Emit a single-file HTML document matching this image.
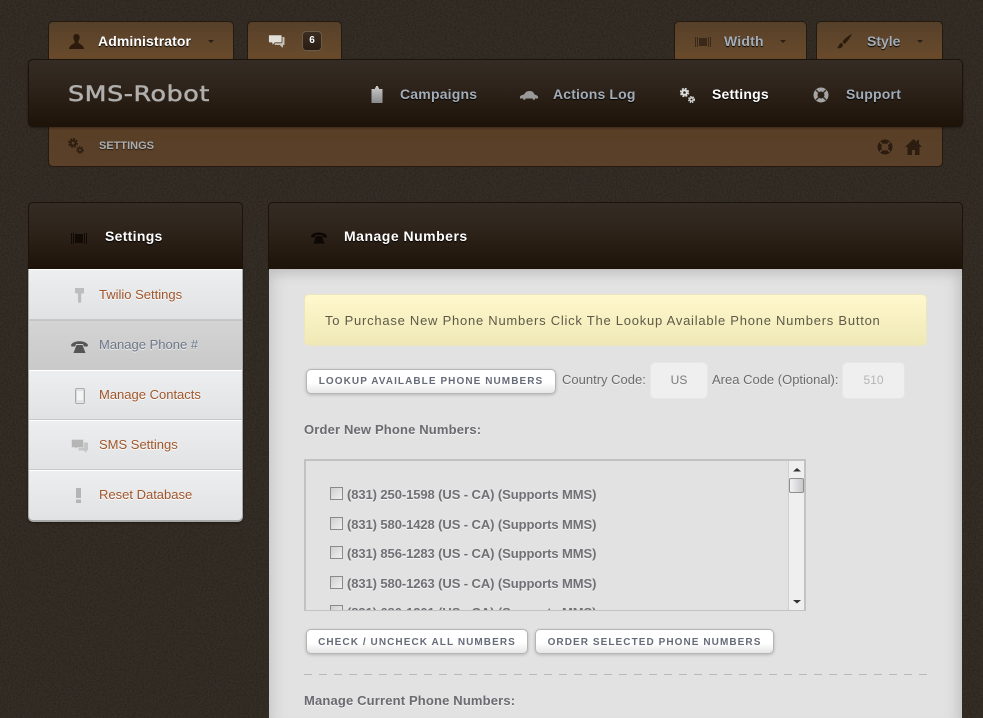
<!DOCTYPE html>
<html><head><meta charset="utf-8"><style>
html,body{margin:0;padding:0;width:983px;height:718px;overflow:hidden;background:#352e26}
body{position:relative;font-family:"Liberation Sans",sans-serif}
.a{position:absolute;box-sizing:border-box}
.t{position:absolute;white-space:nowrap;line-height:16px}
.tab{position:absolute;top:21px;height:40px;box-sizing:border-box;border:1px solid #241a10;border-radius:5px 5px 0 0;background:linear-gradient(#56402a,#6a4b2b)}
.nav{font-weight:bold;font-size:14px;color:#a3adb8;text-shadow:0 1px 1px #000;letter-spacing:.2px}
.w{color:#fff}
.caret{position:absolute;width:0;height:0;border:3px solid transparent;border-top:3px solid #2c1f12;border-bottom:0}
.dark{background:linear-gradient(#342c24 0,#2e241b 40%,#1e1308 100%)}
.item{position:absolute;left:29px;width:213px;height:50px;box-sizing:border-box;background:linear-gradient(#edeef0,#e1e2e4);border-top:1px solid #fff;border-bottom:1px solid #c8c8c8}
.il{position:absolute;left:99px;font-size:13px;color:#a0562a;white-space:nowrap;line-height:16px;text-shadow:0 1px 0 #fff}
.btn{position:absolute;box-sizing:border-box;height:25px;background:linear-gradient(#fff 55%,#e6e6e6);border:1px solid #b5b5b5;border-radius:5px;box-shadow:0 1px 3px rgba(0,0,0,.2);font-size:10px;font-weight:bold;letter-spacing:1.07px;color:#666b78;text-align:center;line-height:23px;white-space:nowrap}
.inp{position:absolute;box-sizing:border-box;height:37px;background:#efefef;border:1px solid #e6e6e6;border-radius:5px;text-align:center;line-height:34px;font-size:12px}
.lbl{position:absolute;font-size:13px;color:#6b6b6b;white-space:nowrap;line-height:16px;text-shadow:0 1px 0 #f4f4f4}
.b{font-weight:bold;font-size:13px;letter-spacing:.16px;color:#6a6a70;text-shadow:0 1px 0 #f4f4f4}
.chk{position:absolute;left:330px;width:13px;height:13px;box-sizing:border-box;border:1px solid #8a8a8a;background:linear-gradient(135deg,#cfcfcf,#f0f0f0)}
.num{position:absolute;left:347px;font-size:13px;letter-spacing:-.09px;font-weight:bold;color:#707075;white-space:nowrap;line-height:16px;text-shadow:0 1px 0 #f4f4f4}
svg{position:absolute;overflow:visible}
</style></head><body>

<svg style="left:0;top:0" width="983" height="718"><filter id="n" x="0" y="0" width="100%" height="100%"><feTurbulence type="fractalNoise" baseFrequency=".6" numOctaves="3" seed="4"/><feColorMatrix values="0 0 0 0 0  0 0 0 0 0  0 0 0 0 0  .5 0 0 0 -.18"/></filter><rect width="983" height="718" filter="url(#n)"/></svg>

<!-- top tabs -->
<div class="tab" style="left:48px;width:186px"></div>
<svg style="left:68px;top:33px" width="17" height="17" viewBox="0 0 17 17"><path fill="#2c1a0c" d="M8.500 1C6 1 5 3 5.500 5.500 5.800 7 6.800 8 6.800 9.500 6 11 1 12 1 16h15c0-4-5-5-5.800-6.500C10.200 8 11.200 7 11.500 5.500 12 3 11 1 8.500 1z"/></svg>
<div class="t nav w" style="left:98px;top:33px;letter-spacing:.1px">Administrator</div>
<div class="caret" style="left:208px;top:40px"></div>

<div class="tab" style="left:247px;width:95px"></div>
<svg style="left:268px;top:34px" width="18" height="15" viewBox="0 0 18 15"><path fill="#c4c0b8" stroke="#c4c0b8" stroke-linejoin="round" d="M7 3.500h9v7h-1.500v2.500l-2.500-2.500H7z"/><path fill="#e2ded8" stroke="#5a4229" stroke-width=".8" stroke-linejoin="round" d="M1.500 .8h11.500a1 1 0 0 1 1 1v6a1 1 0 0 1-1 1H7l-3 3v-3H1.500a1 1 0 0 1-1-1v-6a1 1 0 0 1 1-1z"/></svg>
<div class="a" style="left:302px;top:31px;width:20px;height:20px;border-radius:4px;background:linear-gradient(#3a2c20,#2a1d13);border:1px solid #6a5a46;color:#fff;font-size:10px;font-weight:bold;text-align:center;line-height:18px">6</div>

<div class="tab" style="left:674px;width:133px"></div>
<svg style="left:695px;top:36px" width="16" height="12" viewBox="0 0 16 12"><path fill="#3a2818" d="M0 1h1v10H0zM2 1h1v10H2zM13 1h1v10h-1zM15 1h1v10h-1zM4 2h8v8H4z"/></svg>
<div class="t nav" style="left:724px;top:33px">Width</div>
<div class="caret" style="left:780px;top:40px"></div>

<div class="tab" style="left:816px;width:127px"></div>
<svg style="left:836px;top:33px" width="17" height="17" viewBox="0 0 17 17"><path fill="#2c1a0c" d="M16 1C12 3 8 6 6.500 9l2 2C11 9 14 5 16 1zM5.500 10C3 10 3.500 13 1 15c3 1 6-.5 6-3.500z"/></svg>
<div class="t nav" style="left:867px;top:33px;letter-spacing:0">Style</div>
<div class="caret" style="left:917px;top:40px"></div>

<!-- sub bar -->
<div class="a" style="left:48px;top:120px;width:895px;height:47px;border:1px solid #241a10;border-radius:0 0 5px 5px;background:linear-gradient(#593e26,#5b4129)"></div>
<svg style="left:68px;top:138px" width="16" height="16" viewBox="0 0 16 16"><g fill="none" stroke="#2c1d10"><circle cx="5" cy="5" r="2.500" stroke-width="2"/><circle cx="5" cy="5" r="4.200" stroke-width="1.600" stroke-dasharray="2 1.300"/><circle cx="12" cy="12" r="1.800" stroke-width="1.400"/><circle cx="12" cy="12" r="3.100" stroke-width="1.300" stroke-dasharray="1.600 1"/></g></svg>
<div class="t" style="left:99px;top:138px;font-size:11px;font-weight:bold;color:#a9aeb2;text-shadow:0 1px 1px #2c1d10">SETTINGS</div>
<svg style="left:877px;top:139px" width="16" height="16" viewBox="0 0 16 16"><circle cx="8" cy="8" r="5.500" fill="none" stroke="#2c1d10" stroke-width="4"/><path stroke="#5d432a" stroke-width="1.500" d="M3 3l3 3M13 3l-3 3M3 13l3-3M13 13l-3-3"/></svg>
<svg style="left:905px;top:139px" width="17" height="16" viewBox="0 0 17 16"><path fill="#2c1d10" d="M8.500 0L0 8h2.500v8H7v-5h3v5h4.500V8H17l-3-3V1h-2v2z"/></svg>

<!-- main nav -->
<div class="a dark" style="left:28px;top:59px;width:935px;height:68px;border:1px solid #1c130a;border-radius:5px;box-shadow:0 1px 2px rgba(0,0,0,.4)"></div>
<div class="t" style="left:68px;top:81px;font-family:'DejaVu Sans',sans-serif;font-size:21px;line-height:26px;color:#b0afad;letter-spacing:.5px;transform-origin:0 50%;transform:scaleX(1.205);-webkit-text-stroke:.5px #b0afad">SMS-Robot</div>

<svg style="left:371px;top:86px" width="12" height="17" viewBox="0 0 12 17"><defs><linearGradient id="g" x1="0" y1="0" x2="0" y2="1"><stop offset="0" stop-color="#ccc"/><stop offset="1" stop-color="#8a8a8a"/></linearGradient></defs><path fill="url(#g)" d="M4 1.500h1V0h2v1.500h1V3h3.500v14H.5V3H4z"/></svg>
<div class="t nav" style="left:400px;top:86px">Campaigns</div>
<svg style="left:520px;top:90px" width="18" height="10" viewBox="0 0 18 10"><path fill="#9a9a9a" d="M0 8.500V6.500Q1 5 4 4.500 6 1 9 1h1.500Q13 1 14.500 4.500 17 5 18 6.500v2h-2.500a2 2 0 0 0-3.500 0H6a2 2 0 0 0-3.500 0z"/><circle cx="4.300" cy="8.500" r="1.300" fill="#9a9a9a"/><circle cx="13.800" cy="8.500" r="1.300" fill="#9a9a9a"/></svg>
<div class="t nav" style="left:553px;top:86px;letter-spacing:.15px">Actions Log</div>
<svg style="left:680px;top:88px" width="15" height="15" viewBox="0 0 15 15"><g fill="none" stroke="#ddd"><circle cx="4.500" cy="4.500" r="2.300" stroke-width="2"/><circle cx="4.500" cy="4.500" r="3.900" stroke-width="1.500" stroke-dasharray="2 1.100"/><circle cx="11.500" cy="11.500" r="1.700" stroke-width="1.300"/><circle cx="11.500" cy="11.500" r="2.900" stroke-width="1.200" stroke-dasharray="1.500 .9"/></g></svg>
<div class="t nav w" style="left:712px;top:86px">Settings</div>
<svg style="left:813px;top:87px" width="16" height="16" viewBox="0 0 16 16"><circle cx="8" cy="8" r="5.500" fill="none" stroke="#a5a5a5" stroke-width="4"/><path stroke="#3a3028" stroke-width="1.500" d="M3 3l3 3M13 3l-3 3M3 13l3-3M13 13l-3-3"/></svg>
<div class="t nav" style="left:846px;top:86px">Support</div>

<!-- sidebar -->
<div class="a dark" style="left:28px;top:202px;width:215px;height:68px;border:1px solid #1c130a;border-radius:5px 5px 0 0"></div>
<svg style="left:71px;top:233px" width="16" height="11" viewBox="0 0 16 11"><path fill="#120a04" d="M0 0h1v11H0zM2 0h1v11H2zM13 0h1v11h-1zM15 0h1v11h-1zM4 1h8v9H4z"/></svg>
<div class="t nav w" style="left:105px;top:228px;letter-spacing:.3px">Settings</div>

<div class="a" style="left:28px;top:269px;width:215px;height:253px;background:#a8a8a8;border-radius:0 0 5px 5px;box-shadow:0 1px 2px rgba(0,0,0,.4)"></div>
<div class="item" style="top:269px;height:51px"></div>
<div class="item" style="top:320px;background:linear-gradient(#d4d4d4,#c9c9c9);border-top:1px solid #c4c4c4;border-bottom:1px solid #ccc"></div>
<div class="item" style="top:370px"></div>
<div class="item" style="top:420px"></div>
<div class="item" style="top:470px;height:50px;border-bottom:0;border-radius:0 0 4px 4px"></div>
<svg style="left:75px;top:288px" width="9" height="15" viewBox="0 0 9 15"><path fill="#bdbdbd" d="M0 0h9v5.500H6.200V14l-1 1H4l-1-1V5.500H1L0 4.500z"/></svg>
<svg style="left:71px;top:340px" width="17" height="13" viewBox="0 0 17 13"><path fill="#555" d="M0 5C2 0 15 0 17 5l-.5 1.500H13L12 4H5L4 6.500H.5z"/><path fill="#555" d="M5.500 5h6l3 8h-12z"/></svg>
<svg style="left:75px;top:388px" width="10" height="16" viewBox="0 0 10 16"><rect x=".5" y=".5" width="9" height="15" rx="1.500" fill="#e8e8e8" stroke="#aaa"/><rect x="1.500" y="2.500" width="7" height="10.500" fill="#f4f4f4" stroke="#ccc" stroke-width=".6"/></svg>
<svg style="left:71px;top:439px" width="17" height="14" viewBox="0 0 17 14"><path fill="#c5c5c5" stroke="#c5c5c5" stroke-linejoin="round" d="M8 4h8.500v7h-1.500v2l-2-2H8z"/><path fill="#b5b5b5" stroke="#e6e6e8" stroke-width=".6" stroke-linejoin="round" d="M.5.500h12v8H6L4 10.500v-2H.5z"/></svg>
<svg style="left:76px;top:488px" width="5" height="15" viewBox="0 0 5 15"><path fill="#b5b5b5" d="M0 0h5v10H0zM0 11.500h5V15H0z"/></svg>
<div class="il" style="top:287px">Twilio Settings</div>
<div class="il" style="top:337px;color:#6d7888;text-shadow:0 1px 0 #eee">Manage Phone #</div>
<div class="il" style="top:387px">Manage Contacts</div>
<div class="il" style="top:437px">SMS Settings</div>
<div class="il" style="top:487px">Reset Database</div>

<!-- main panel -->
<div class="a dark" style="left:268px;top:202px;width:695px;height:68px;border:1px solid #1c130a;border-radius:5px 5px 0 0"></div>
<svg style="left:311px;top:231px" width="16" height="13" viewBox="0 0 17 13"><path fill="#0e0804" d="M0 5C2 0 15 0 17 5l-.5 1.500H13L12 4H5L4 6.500H.5z"/><path fill="#0e0804" d="M5.500 5h6l3 8h-12z"/></svg>
<div class="t nav w" style="left:344px;top:228px;letter-spacing:.5px">Manage Numbers</div>

<div class="a" style="left:269px;top:269px;width:693px;height:449px;background:#e2e2e2;box-shadow:inset 18px 0 16px -16px #c0c0c0,inset -18px 0 16px -16px #b8b8b8,inset 0 14px 12px -10px #bcbcbc"></div>

<div class="a" style="left:304px;top:294px;width:623px;height:52px;border-radius:5px;background:linear-gradient(#fff8cd,#efe8b6);border:1px solid #ebe6c0"></div>
<div class="t" style="left:325px;top:313px;font-size:13px;color:#5e5a48;letter-spacing:.755px">To Purchase New Phone Numbers Click The Lookup Available Phone Numbers Button</div>

<div class="btn" style="left:306px;top:369px;width:250px">LOOKUP AVAILABLE PHONE NUMBERS</div>
<div class="lbl" style="left:562px;top:372px">Country Code:</div>
<div class="inp" style="left:650px;top:362px;width:58px;color:#7a7a7a">US</div>
<div class="lbl" style="left:712px;top:372px">Area Code (Optional):</div>
<div class="inp" style="left:842px;top:362px;width:63px;color:#b5b5b5">510</div>

<div class="t b" style="left:304px;top:422px">Order New Phone Numbers:</div>

<!-- list -->
<div class="a" style="left:304px;top:459px;width:502px;height:152px;border:2px solid #c2c2c2;border-bottom-width:1px"></div>
<div class="chk" style="top:487px"></div><div class="num" style="top:487px">(831) 250-1598 (US - CA) (Supports MMS)</div>
<div class="chk" style="top:517px"></div><div class="num" style="top:517px">(831) 580-1428 (US - CA) (Supports MMS)</div>
<div class="chk" style="top:546px"></div><div class="num" style="top:546px">(831) 856-1283 (US - CA) (Supports MMS)</div>
<div class="chk" style="top:576px"></div><div class="num" style="top:576px">(831) 580-1263 (US - CA) (Supports MMS)</div>
<div class="a" style="left:306px;top:600px;width:482px;height:10px;overflow:hidden">
  <div class="chk" style="left:24px;top:5px"></div><div class="num" style="left:41px;top:5px">(831) 680-1201 (US - CA) (Supports MMS)</div>
</div>
<div class="a" style="left:788px;top:461px;width:16px;height:149px;background:#efefef;border-left:1px solid #d0d0d0"></div>
<svg style="left:793px;top:466px" width="8" height="140" viewBox="0 0 8 140"><path fill="#333" d="M0 5.500l4-3.500 4 3.500zM0 134h8l-4 3.500z"/></svg>
<div class="a" style="left:789px;top:478px;width:15px;height:15px;border:1px solid #8f8f8f;border-radius:2px;background:linear-gradient(90deg,#f2f2f2,#c8c8cc)"></div>

<div class="btn" style="left:306px;top:629px;width:222px;line-height:25px">CHECK / UNCHECK ALL NUMBERS</div>
<div class="btn" style="left:535px;top:629px;width:239px;line-height:25px">ORDER SELECTED PHONE NUMBERS</div>

<svg style="left:304px;top:674px" width="623" height="1"><line x1="0" y1=".5" x2="623" y2=".5" stroke="#b8b8b8" stroke-dasharray="8 7"/></svg>
<div class="t b" style="left:304px;top:693px">Manage Current Phone Numbers:</div>
</body></html>
